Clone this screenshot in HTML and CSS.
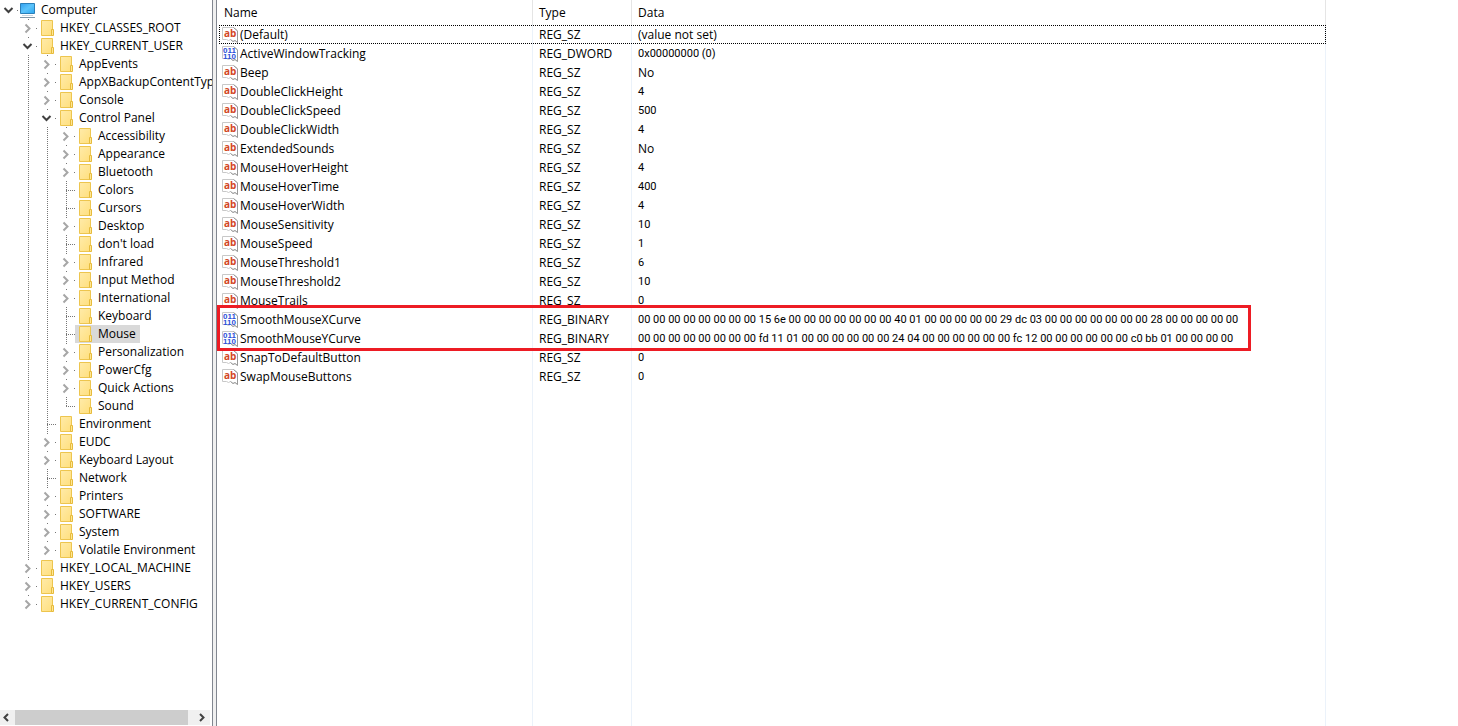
FILE: index.html
```html
<!DOCTYPE html>
<html lang="en">
<head>
<meta charset="utf-8">
<title>Registry Editor</title>
<link rel="stylesheet" href="styles.css">
</head>
<body>
<svg class="defs" aria-hidden="true">
  <defs>
    <linearGradient id="fill-folder" x1="0" y1="0" x2="1" y2="1"><stop offset="0" stop-color="#ffebaa"/><stop offset="1" stop-color="#ffdf7d"/></linearGradient>
    <linearGradient id="fill-screen" x1="0" y1="0" x2="1" y2="1"><stop offset="0" stop-color="#2f9ff0"/><stop offset=".5" stop-color="#5cc4fb"/><stop offset="1" stop-color="#2aa5ef"/></linearGradient>
  </defs>
  <symbol id="folder" viewBox="0 0 16 16"><path d="M3.5.5h11v15h-11z" fill="url(#fill-folder)" stroke="#edc54e"/><path d="M13.5 9.5h2v6h-2z" fill="#ffe694" stroke="#e6bb3c"/></symbol>
  <symbol id="computer" viewBox="0 0 16 16"><path d="M1.5 1.5h14v10h-14z" fill="url(#fill-screen)" stroke="#2b7fb8"/><path d="M3 13.5h11" stroke="#c9d6df"/><path d="M1 15.5h15" stroke="#8298a8"/></symbol>
  <symbol id="closed" viewBox="0 0 11 16"><path d="M3.5 4.500 7.500 8.500l-4 4" fill="none" stroke="#a6a6a6" stroke-width="2"/></symbol>
  <symbol id="open" viewBox="0 0 11 16"><path d="M1.500 6 5.500 10l4-4" fill="none" stroke="#404040" stroke-width="2"/></symbol>
  <symbol id="page" viewBox="0 0 16 16"><path d="M.5 12.500V.5h11l4 3v12l-2.500-2-2 1-2.500-2-2 1-2-1z" fill="#fff" stroke="#c8c8c8"/><path d="M11.500.5 15.500 4v11.500l-2.500-2-2 1-2.500-2" fill="none" stroke="#999"/></symbol>
</svg>
<div class="window">
  <nav class="sidebar" aria-label="Registry keys">
    <div class="tree-view">
      <ul class="tree root">
        <li><div class="row"><button class="toggle" aria-label="Collapse"><svg><use href="#open"/></svg></button><svg class="icon"><use href="#computer"/></svg><span class="label">Computer</span></div>
          <ul class="tree">
            <li><div class="row"><button class="toggle" aria-label="Expand"><svg><use href="#closed"/></svg></button><svg class="icon"><use href="#folder"/></svg><span class="label">HKEY_CLASSES_ROOT</span></div></li>
            <li><div class="row"><button class="toggle" aria-label="Collapse"><svg><use href="#open"/></svg></button><svg class="icon"><use href="#folder"/></svg><span class="label">HKEY_CURRENT_USER</span></div>
              <ul class="tree">
                <li><div class="row"><button class="toggle" aria-label="Expand"><svg><use href="#closed"/></svg></button><svg class="icon"><use href="#folder"/></svg><span class="label">AppEvents</span></div></li>
                <li><div class="row"><button class="toggle" aria-label="Expand"><svg><use href="#closed"/></svg></button><svg class="icon"><use href="#folder"/></svg><span class="label">AppXBackupContentTyp</span></div></li>
                <li><div class="row"><button class="toggle" aria-label="Expand"><svg><use href="#closed"/></svg></button><svg class="icon"><use href="#folder"/></svg><span class="label">Console</span></div></li>
                <li><div class="row"><button class="toggle" aria-label="Collapse"><svg><use href="#open"/></svg></button><svg class="icon"><use href="#folder"/></svg><span class="label">Control Panel</span></div>
                  <ul class="tree">
                    <li><div class="row"><button class="toggle" aria-label="Expand"><svg><use href="#closed"/></svg></button><svg class="icon"><use href="#folder"/></svg><span class="label">Accessibility</span></div></li>
                    <li><div class="row"><button class="toggle" aria-label="Expand"><svg><use href="#closed"/></svg></button><svg class="icon"><use href="#folder"/></svg><span class="label">Appearance</span></div></li>
                    <li><div class="row"><button class="toggle" aria-label="Expand"><svg><use href="#closed"/></svg></button><svg class="icon"><use href="#folder"/></svg><span class="label">Bluetooth</span></div></li>
                    <li><div class="row"><span class="elbow"></span><svg class="icon"><use href="#folder"/></svg><span class="label">Colors</span></div></li>
                    <li><div class="row"><span class="elbow"></span><svg class="icon"><use href="#folder"/></svg><span class="label">Cursors</span></div></li>
                    <li><div class="row"><button class="toggle" aria-label="Expand"><svg><use href="#closed"/></svg></button><svg class="icon"><use href="#folder"/></svg><span class="label">Desktop</span></div></li>
                    <li><div class="row"><span class="elbow"></span><svg class="icon"><use href="#folder"/></svg><span class="label">don't load</span></div></li>
                    <li><div class="row"><button class="toggle" aria-label="Expand"><svg><use href="#closed"/></svg></button><svg class="icon"><use href="#folder"/></svg><span class="label">Infrared</span></div></li>
                    <li><div class="row"><button class="toggle" aria-label="Expand"><svg><use href="#closed"/></svg></button><svg class="icon"><use href="#folder"/></svg><span class="label">Input Method</span></div></li>
                    <li><div class="row"><button class="toggle" aria-label="Expand"><svg><use href="#closed"/></svg></button><svg class="icon"><use href="#folder"/></svg><span class="label">International</span></div></li>
                    <li><div class="row"><span class="elbow"></span><svg class="icon"><use href="#folder"/></svg><span class="label">Keyboard</span></div></li>
                    <li><div class="row selected"><span class="elbow"></span><svg class="icon"><use href="#folder"/></svg><span class="label">Mouse</span></div></li>
                    <li><div class="row"><button class="toggle" aria-label="Expand"><svg><use href="#closed"/></svg></button><svg class="icon"><use href="#folder"/></svg><span class="label">Personalization</span></div></li>
                    <li><div class="row"><button class="toggle" aria-label="Expand"><svg><use href="#closed"/></svg></button><svg class="icon"><use href="#folder"/></svg><span class="label">PowerCfg</span></div></li>
                    <li><div class="row"><button class="toggle" aria-label="Expand"><svg><use href="#closed"/></svg></button><svg class="icon"><use href="#folder"/></svg><span class="label">Quick Actions</span></div></li>
                    <li><div class="row"><span class="elbow"></span><svg class="icon"><use href="#folder"/></svg><span class="label">Sound</span></div></li>
                  </ul>
                </li>
                <li><div class="row"><span class="elbow"></span><svg class="icon"><use href="#folder"/></svg><span class="label">Environment</span></div></li>
                <li><div class="row"><button class="toggle" aria-label="Expand"><svg><use href="#closed"/></svg></button><svg class="icon"><use href="#folder"/></svg><span class="label">EUDC</span></div></li>
                <li><div class="row"><button class="toggle" aria-label="Expand"><svg><use href="#closed"/></svg></button><svg class="icon"><use href="#folder"/></svg><span class="label">Keyboard Layout</span></div></li>
                <li><div class="row"><span class="elbow"></span><svg class="icon"><use href="#folder"/></svg><span class="label">Network</span></div></li>
                <li><div class="row"><button class="toggle" aria-label="Expand"><svg><use href="#closed"/></svg></button><svg class="icon"><use href="#folder"/></svg><span class="label">Printers</span></div></li>
                <li><div class="row"><button class="toggle" aria-label="Expand"><svg><use href="#closed"/></svg></button><svg class="icon"><use href="#folder"/></svg><span class="label">SOFTWARE</span></div></li>
                <li><div class="row"><button class="toggle" aria-label="Expand"><svg><use href="#closed"/></svg></button><svg class="icon"><use href="#folder"/></svg><span class="label">System</span></div></li>
                <li><div class="row"><button class="toggle" aria-label="Expand"><svg><use href="#closed"/></svg></button><svg class="icon"><use href="#folder"/></svg><span class="label">Volatile Environment</span></div></li>
              </ul>
            </li>
            <li><div class="row"><button class="toggle" aria-label="Expand"><svg><use href="#closed"/></svg></button><svg class="icon"><use href="#folder"/></svg><span class="label">HKEY_LOCAL_MACHINE</span></div></li>
            <li><div class="row"><button class="toggle" aria-label="Expand"><svg><use href="#closed"/></svg></button><svg class="icon"><use href="#folder"/></svg><span class="label">HKEY_USERS</span></div></li>
            <li><div class="row"><button class="toggle" aria-label="Expand"><svg><use href="#closed"/></svg></button><svg class="icon"><use href="#folder"/></svg><span class="label">HKEY_CURRENT_CONFIG</span></div></li>
          </ul>
        </li>
      </ul>
    </div>
    <div class="scrollbar">
      <button class="arrow" aria-label="Scroll left"><svg viewBox="0 0 15 15"><path d="M8 4 4.500 7.500 8 11" fill="none" stroke="#404040" stroke-width="2"/></svg></button>
      <div class="track"><div class="thumb"></div></div>
      <button class="arrow" aria-label="Scroll right"><svg viewBox="0 0 15 15"><path d="M5 4 8.500 7.500 5 11" fill="none" stroke="#404040" stroke-width="2"/></svg></button>
    </div>
  </nav>
  <div class="splitter"></div>
  <main class="values">
    <table class="grid">
      <colgroup><col class="col-name"><col class="col-type"><col class="col-data"></colgroup>
      <thead><tr><th>Name</th><th>Type</th><th>Data</th></tr></thead>
      <tbody>
        <tr class="focused"><td><div class="name"><svg class="icon"><use href="#page"/><text class="glyph-string" x="2" y="10">ab</text></svg>(Default)</div></td><td>REG_SZ</td><td>(value not set)</td></tr>
        <tr><td><div class="name"><svg class="icon"><use href="#page"/><text class="glyph-binary" x="1" y="7">011</text><text class="glyph-binary" x="1" y="13">110</text></svg>ActiveWindowTracking</div></td><td>REG_DWORD</td><td class="number">0x00000000 (0)</td></tr>
        <tr><td><div class="name"><svg class="icon"><use href="#page"/><text class="glyph-string" x="2" y="10">ab</text></svg>Beep</div></td><td>REG_SZ</td><td>No</td></tr>
        <tr><td><div class="name"><svg class="icon"><use href="#page"/><text class="glyph-string" x="2" y="10">ab</text></svg>DoubleClickHeight</div></td><td>REG_SZ</td><td class="number">4</td></tr>
        <tr><td><div class="name"><svg class="icon"><use href="#page"/><text class="glyph-string" x="2" y="10">ab</text></svg>DoubleClickSpeed</div></td><td>REG_SZ</td><td class="number">500</td></tr>
        <tr><td><div class="name"><svg class="icon"><use href="#page"/><text class="glyph-string" x="2" y="10">ab</text></svg>DoubleClickWidth</div></td><td>REG_SZ</td><td class="number">4</td></tr>
        <tr><td><div class="name"><svg class="icon"><use href="#page"/><text class="glyph-string" x="2" y="10">ab</text></svg>ExtendedSounds</div></td><td>REG_SZ</td><td>No</td></tr>
        <tr><td><div class="name"><svg class="icon"><use href="#page"/><text class="glyph-string" x="2" y="10">ab</text></svg>MouseHoverHeight</div></td><td>REG_SZ</td><td class="number">4</td></tr>
        <tr><td><div class="name"><svg class="icon"><use href="#page"/><text class="glyph-string" x="2" y="10">ab</text></svg>MouseHoverTime</div></td><td>REG_SZ</td><td class="number">400</td></tr>
        <tr><td><div class="name"><svg class="icon"><use href="#page"/><text class="glyph-string" x="2" y="10">ab</text></svg>MouseHoverWidth</div></td><td>REG_SZ</td><td class="number">4</td></tr>
        <tr><td><div class="name"><svg class="icon"><use href="#page"/><text class="glyph-string" x="2" y="10">ab</text></svg>MouseSensitivity</div></td><td>REG_SZ</td><td class="number">10</td></tr>
        <tr><td><div class="name"><svg class="icon"><use href="#page"/><text class="glyph-string" x="2" y="10">ab</text></svg>MouseSpeed</div></td><td>REG_SZ</td><td class="number">1</td></tr>
        <tr><td><div class="name"><svg class="icon"><use href="#page"/><text class="glyph-string" x="2" y="10">ab</text></svg>MouseThreshold1</div></td><td>REG_SZ</td><td class="number">6</td></tr>
        <tr><td><div class="name"><svg class="icon"><use href="#page"/><text class="glyph-string" x="2" y="10">ab</text></svg>MouseThreshold2</div></td><td>REG_SZ</td><td class="number">10</td></tr>
        <tr><td><div class="name"><svg class="icon"><use href="#page"/><text class="glyph-string" x="2" y="10">ab</text></svg>MouseTrails</div></td><td>REG_SZ</td><td class="number">0</td></tr>
        <tr><td><div class="name"><svg class="icon"><use href="#page"/><text class="glyph-binary" x="1" y="7">011</text><text class="glyph-binary" x="1" y="13">110</text></svg>SmoothMouseXCurve</div></td><td>REG_BINARY</td><td class="number">00 00 00 00 00 00 00 00 15 6e 00 00 00 00 00 00 00 40 01 00 00 00 00 00 29 dc 03 00 00 00 00 00 00 00 28 00 00 00 00 00</td></tr>
        <tr><td><div class="name"><svg class="icon"><use href="#page"/><text class="glyph-binary" x="1" y="7">011</text><text class="glyph-binary" x="1" y="13">110</text></svg>SmoothMouseYCurve</div></td><td>REG_BINARY</td><td class="number">00 00 00 00 00 00 00 00 fd 11 01 00 00 00 00 00 00 24 04 00 00 00 00 00 00 fc 12 00 00 00 00 00 00 c0 bb 01 00 00 00 00</td></tr>
        <tr><td><div class="name"><svg class="icon"><use href="#page"/><text class="glyph-string" x="2" y="10">ab</text></svg>SnapToDefaultButton</div></td><td>REG_SZ</td><td class="number">0</td></tr>
        <tr><td><div class="name"><svg class="icon"><use href="#page"/><text class="glyph-string" x="2" y="10">ab</text></svg>SwapMouseButtons</div></td><td>REG_SZ</td><td class="number">0</td></tr>
        <tr class="filler" aria-hidden="true"><td></td><td></td><td></td></tr>
      </tbody>
    </table>
    <div class="highlight"></div>
  </main>
</div>
</body>
</html>
```

FILE: styles.css
```css
* { box-sizing: border-box; }
body {
  margin: 0;
  background: #fff;
  color: #000;
  font: 12px/18px "Open Sans", "Noto Sans", sans-serif;
}
button { padding: 0; border: 0; background: none; }
svg { display: block; flex: none; }
.defs { position: absolute; width: 0; height: 0; }
.window { display: flex; height: 100vh; overflow: hidden; }

/* Key tree */
.sidebar { flex: none; width: 212px; display: flex; flex-direction: column; padding-bottom: 1px; }
.tree-view { flex: 1; min-height: 0; overflow: hidden; padding-top: 1px; }
.tree { list-style: none; margin: 0; padding: 0 0 0 19px; }
.root { padding-left: 0; }
.tree li { background: repeating-linear-gradient(#777 0 1px, transparent 1px 2px) 9px 0 / 1px 100% no-repeat; }
.tree li:last-child {
  background: linear-gradient(#fff, #fff) 9px 10px / 1px 100% no-repeat,
    repeating-linear-gradient(#777 0 1px, transparent 1px 2px) 9px 0 / 1px 100% no-repeat;
}
.root > li:last-child { background: none; }
.row { display: flex; align-items: center; height: 18px; white-space: nowrap; }
.toggle, .elbow { flex: none; width: 19px; height: 18px; }
.toggle {
  padding: 1px 5px 1px 3px;
  background: repeating-linear-gradient(90deg, #777 0 1px, transparent 1px 2px) 17px 9px / 3px 1px no-repeat;
}
.toggle svg { width: 11px; height: 16px; background: #fff; }
.elbow { background: repeating-linear-gradient(90deg, #777 0 1px, transparent 1px 2px) 9px 9px / 10px 1px no-repeat; }
.icon { width: 16px; height: 16px; }
.label { padding: 0 4px 0 6px; }
.row.selected { background: linear-gradient(#d9d9d9, #d9d9d9) 18px 0 / 100% no-repeat; width: fit-content; }
.row.selected .elbow { background-color: transparent; }

.scrollbar { display: flex; height: 15px; margin-right: 2px; background: #f0f0f0; }
.arrow { flex: none; width: 15px; height: 15px; }
.track { flex: 1; }
.thumb { width: 96%; height: 15px; background: #cdcdcd; }

.splitter { flex: none; width: 5px; background: #f0f0f0; border: solid #828790; border-width: 0 1px; }

/* Value list */
.values { flex: 1; min-width: 0; position: relative; padding-left: 2px; }
.grid { table-layout: fixed; width: 1107px; height: 100%; border-spacing: 0; }
.col-name { width: 314px; }
.col-type { width: 99px; }
.grid th, .grid td {
  padding: 0 0 0 6px;
  border-right: 1px solid #ebf2fa;
  text-align: left;
  font-weight: 400;
  white-space: nowrap;
}
.grid th { height: 25px; border-color: #e5e5e5; }
.grid th:first-child { padding-left: 5px; }
.grid td { height: 19px; }
.grid td:first-child { padding-left: 3px; }
.grid .filler td { height: auto; }
.focused { outline: 1px dotted #000; outline-offset: -1px; }
.name { display: flex; align-items: center; gap: 2px; }
.number { font-family: Roboto, sans-serif; font-size: 11px; }
.glyph-string { font: bold 10px "Open Sans", sans-serif; fill: #d24726; }
.glyph-binary { font: bold 8px "Liberation Sans", sans-serif; fill: #2b4fd8; }
.highlight {
  position: absolute;
  top: 305px;
  left: 0;
  width: 1034px;
  height: 46px;
  border: 3px solid #ed1c24;
}
```
